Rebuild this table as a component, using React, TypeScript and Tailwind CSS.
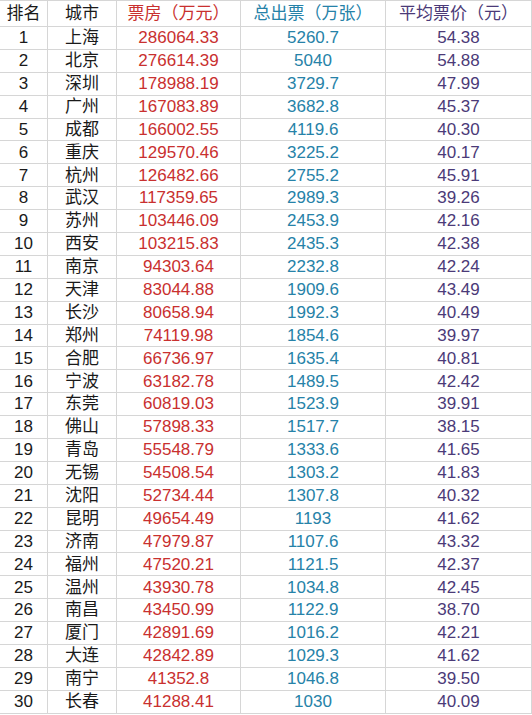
import React from "react";

const rows: [string, string, string, string][] = [
  ["上海", "286064.33", "5260.7", "54.38"],
  ["北京", "276614.39", "5040", "54.88"],
  ["深圳", "178988.19", "3729.7", "47.99"],
  ["广州", "167083.89", "3682.8", "45.37"],
  ["成都", "166002.55", "4119.6", "40.30"],
  ["重庆", "129570.46", "3225.2", "40.17"],
  ["杭州", "126482.66", "2755.2", "45.91"],
  ["武汉", "117359.65", "2989.3", "39.26"],
  ["苏州", "103446.09", "2453.9", "42.16"],
  ["西安", "103215.83", "2435.3", "42.38"],
  ["南京", "94303.64", "2232.8", "42.24"],
  ["天津", "83044.88", "1909.6", "43.49"],
  ["长沙", "80658.94", "1992.3", "40.49"],
  ["郑州", "74119.98", "1854.6", "39.97"],
  ["合肥", "66736.97", "1635.4", "40.81"],
  ["宁波", "63182.78", "1489.5", "42.42"],
  ["东莞", "60819.03", "1523.9", "39.91"],
  ["佛山", "57898.33", "1517.7", "38.15"],
  ["青岛", "55548.79", "1333.6", "41.65"],
  ["无锡", "54508.54", "1303.2", "41.83"],
  ["沈阳", "52734.44", "1307.8", "40.32"],
  ["昆明", "49654.49", "1193", "41.62"],
  ["济南", "47979.87", "1107.6", "43.32"],
  ["福州", "47520.21", "1121.5", "42.37"],
  ["温州", "43930.78", "1034.8", "42.45"],
  ["南昌", "43450.99", "1122.9", "38.70"],
  ["厦门", "42891.69", "1016.2", "42.21"],
  ["大连", "42842.89", "1029.3", "41.62"],
  ["南宁", "41352.8", "1046.8", "39.50"],
  ["长春", "41288.41", "1030", "40.09"],
];

const cell =
  "flex items-center justify-center border-r border-b border-[#d6d6d6] whitespace-nowrap";

export default function App() {
  return (
    <div className="w-[532px] h-[715px] bg-white overflow-hidden font-['Liberation_Sans','Noto_Sans_CJK_SC',sans-serif]">
      <div className="grid grid-cols-[48px_69px_124px_145px_146px] border-t border-[#d6d6d6]">
        <div className={`${cell} h-[26px] text-[17px] text-[#1a1a1a]`}>排名</div>
        <div className={`${cell} h-[26px] text-[17px] text-[#1a1a1a]`}>城市</div>
        <div className={`${cell} h-[26px] text-[17px] text-[#c9302f]`}>票房（万元）</div>
        <div className={`${cell} h-[26px] text-[17px] text-[#2682a8]`}>总出票（万张）</div>
        <div className={`${cell} h-[26px] text-[17px] text-[#4b3a78]`}>平均票价（元）</div>
        {rows.map((r, i) => (
          <React.Fragment key={i}>
            <div className={`${cell} h-[22.9px] text-[17px] text-[#1a1a1a]`}>{i + 1}</div>
            <div className={`${cell} h-[22.9px] text-[17px] text-[#1a1a1a]`}>{r[0]}</div>
            <div className={`${cell} h-[22.9px] text-[17px] text-[#c9302f]`}>{r[1]}</div>
            <div className={`${cell} h-[22.9px] text-[17px] text-[#2682a8]`}>{r[2]}</div>
            <div className={`${cell} h-[22.9px] text-[17px] text-[#4b3a78]`}>{r[3]}</div>
          </React.Fragment>
        ))}
      </div>
    </div>
  );
}
